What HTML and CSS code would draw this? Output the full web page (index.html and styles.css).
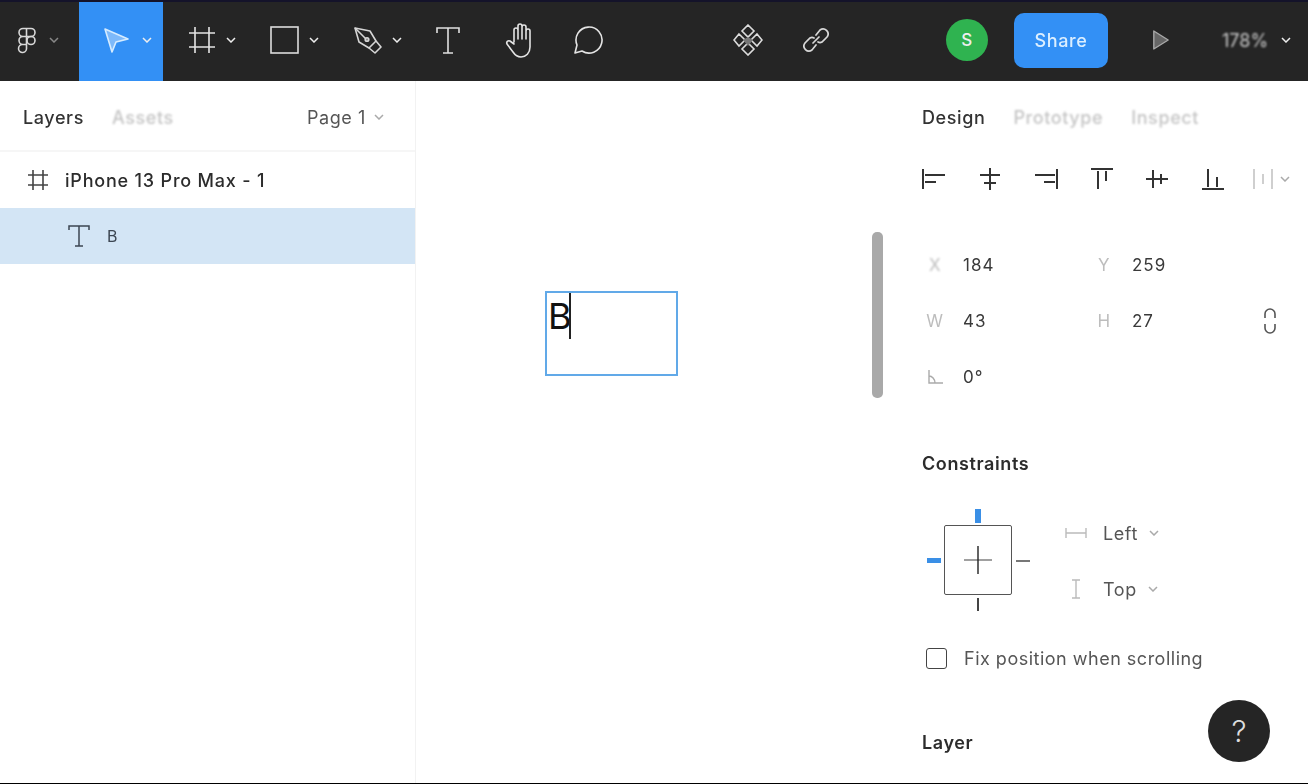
FILE: index.html
```html
<!doctype html>
<html lang="en-us">
  <head>
    <meta charset="utf-8">
    <title>Figma - iPhone 13 Pro Max</title>
    <link rel="stylesheet" href="styles.css">
  </head>
  <body>
    <svg class="defs" width="0" height="0">
      <symbol id="chev" viewBox="0 0 10 6"><path d="M1 1l4 4 4-4" fill="none" stroke="currentColor" stroke-width="1.5"/></symbol>
    </svg>

    <div class="app">
      <!-- top toolbar -->
      <header class="toolbar">
        <div class="menu">
          <svg class="ic-logo" width="20" height="27" viewBox="0 0 20 27" fill="none" stroke="#d8d8d8" stroke-width="1.6">
            <path d="M9.5 1.5H6a4 4 0 0 0 0 8h3.5zM9.5 1.5H14a4 4 0 0 1 0 8H9.5zM9.5 9.5H6a4 4 0 0 0 0 8h3.5zM9.5 17.5H6a4 4 0 1 0 3.5 4.5z"/>
            <circle cx="14" cy="13.5" r="4"/>
          </svg>
          <svg class="chev chev-dim"><use href="#chev"/></svg>
        </div>
        <div class="move">
          <svg width="27" height="27" viewBox="0 0 27 27">
            <path d="M2 2l7 23 4-10 12-3z" fill="#7db9fa" stroke="#d6ecff" stroke-width="1.6" stroke-linejoin="round"/>
          </svg>
          <svg class="chev"><use href="#chev"/></svg>
        </div>
        <div class="tool tool-frame">
          <svg width="28" height="28" viewBox="0 0 28 28" fill="none" stroke="#e4e4e4" stroke-width="1.6">
            <path d="M7 1v26M21 1v26M1 7h26M1 21h26"/>
          </svg>
          <svg class="chev"><use href="#chev"/></svg>
        </div>
        <div class="tool tool-rect">
          <svg width="29" height="28" viewBox="0 0 29 28" fill="none" stroke="#dcdcdc" stroke-width="1.6">
            <rect x="1" y="1" width="27" height="26"/>
          </svg>
          <svg class="chev"><use href="#chev"/></svg>
        </div>
        <div class="tool tool-pen">
          <svg width="28" height="28" viewBox="0 0 28 28" fill="none" stroke="#d6d6d6" stroke-width="1.6" stroke-linejoin="round">
            <path d="M1 2l15 3 6 10-7 7-10-6z"/>
            <path d="M1 2l11 11"/>
            <circle cx="13" cy="13.5" r="1.8" fill="#8a8a8a"/>
            <path d="M15 22l6 5 6-6-5-6"/>
          </svg>
          <svg class="chev"><use href="#chev"/></svg>
        </div>
        <svg class="tool-t" width="24" height="28" viewBox="0 0 24 28" fill="none" stroke="#e0e0e0" stroke-width="1.6">
          <path d="M1 7V2h22v5M12 2v25M7 27h10"/>
        </svg>
        <svg class="tool-hand" width="30" height="36" viewBox="0 0 30 36" fill="none" stroke="#e4e4e4" stroke-width="1.6" stroke-linejoin="round" stroke-linecap="round">
          <path d="M9 20V8a2 2 0 0 1 4 0v9M13 17V4a2 2 0 0 1 4 0v13M17 17V5a2 2 0 0 1 4 0v12M21 17V9a2 2 0 0 1 4 0v16c0 6-4 10-9 10-4 0-6-2-8-5l-6-8c-1-2 1-4 3-3l4 3"/>
        </svg>
        <svg class="tool-comment" width="32" height="28" viewBox="0 0 32 28" fill="none" stroke="#e4e4e4" stroke-width="1.6" stroke-linejoin="round">
          <path d="M2 27l2-8a13 13 0 1 1 5 6z"/>
        </svg>
        <svg class="tool-comp" width="30" height="32" viewBox="0 0 30 32" fill="none" stroke="#dcdcdc" stroke-width="1.6">
          <path d="M15 1l6 6-6 6-6-6zM15 19l6 6-6 6-6-6zM6 10l6 6-6 6-5-6zM24 10l5 6-5 6-6-6z"/>
          <path d="M15 13l5 3-5 6-5-6z" fill="#777" stroke="none"/>
        </svg>
        <svg class="tool-link" width="26" height="26" viewBox="0 0 26 26" fill="none" stroke="#d8d8d8" stroke-width="1.7" stroke-linecap="round">
          <path d="M13 8l4-5a5 5 0 0 1 7 7l-5 5a4 4 0 0 1-4 0M13 18l-4 5a5 5 0 0 1-7-7l5-5a4 4 0 0 1 4 0M10 16l6-6"/>
        </svg>
        <div class="top-right">
          <div class="avatar">S</div>
          <div class="share"><span>Share</span></div>
          <svg class="play" width="18" height="22" viewBox="0 0 20 24">
            <path d="M2 2l16 10L2 22z" fill="#666" stroke="#aaa" stroke-width="1.5" stroke-linejoin="round"/>
          </svg>
          <span class="zoom-val">178%</span>
          <svg class="chev"><use href="#chev"/></svg>
        </div>
      </header>

      <div class="workspace">
        <!-- layers panel -->
        <aside class="left">
          <div class="left-head">
            <span class="tab tab-on">Layers</span>
            <span class="tab tab-off">Assets</span>
            <span class="page">Page 1</span>
            <svg class="chev chev-soft"><use href="#chev"/></svg>
          </div>
          <div class="row">
            <svg width="22" height="22" viewBox="0 0 22 22" fill="none" stroke="#444" stroke-width="1.6">
              <path d="M6 1v20M16 1v20M1 6h20M1 16h20"/>
            </svg>
            <span class="row-name">iPhone 13 Pro Max - 1</span>
          </div>
          <div class="row row-sel">
            <svg width="22" height="22" viewBox="0 0 22 22" fill="none" stroke="#3c4652" stroke-width="1.5">
              <path d="M1 5V1h20v4M11 1v20M7 21h8"/>
            </svg>
            <span class="row-b">B</span>
          </div>
        </aside>

        <!-- canvas -->
        <main class="canvas">
          <div class="frame">
            <span class="frame-text">B</span><span class="caret"></span>
          </div>
          <div class="scroll"></div>
        </main>

        <!-- design panel -->
        <aside class="right">
          <div class="right-head">
            <span class="tab tab-on">Design</span>
            <span class="tab tab-off">Prototype</span>
            <span class="tab tab-off">Inspect</span>
          </div>
          <div class="aligns">
            <svg width="24" height="22" viewBox="0 0 24 22" stroke="#333" stroke-width="2"><path d="M1 1v20" /><path d="M3 7h20M3 14h11"/></svg>
            <svg width="24" height="22" viewBox="0 0 24 22" stroke="#333" stroke-width="2"><path d="M12 0v22M2 7h20M6 15h12"/></svg>
            <svg width="24" height="22" viewBox="0 0 24 22" stroke="#333" stroke-width="2"><path d="M23 1v20M1 7h20M10 14h11"/></svg>
            <svg width="22" height="22" viewBox="0 0 22 22" stroke="#333" stroke-width="2"><path d="M0 1h22M7 3v18M15 3v10"/></svg>
            <svg width="24" height="22" viewBox="0 0 24 22" stroke="#333" stroke-width="2"><path d="M1 11h22M8 2v18M16 6v10"/></svg>
            <svg width="24" height="22" viewBox="0 0 24 22" stroke="#333" stroke-width="2"><path d="M1 21h22M7 1v18M16 9v10"/></svg>
            <div class="dist">
              <svg width="22" height="22" viewBox="0 0 22 22" stroke="#c4c4c4" stroke-width="1.6"><path d="M2 1v20M20 1v20M11 6v10"/></svg>
              <svg class="chev chev-soft"><use href="#chev"/></svg>
            </div>
          </div>

          <div class="props">
            <div class="prop"><span class="prop-label label-soft">X</span><span class="prop-val">184</span></div>
            <div class="prop"><span class="prop-label">Y</span><span class="prop-val">259</span></div>
            <div class="prop"><span class="prop-label">W</span><span class="prop-val">43</span></div>
            <div class="prop"><span class="prop-label">H</span><span class="prop-val">27</span></div>
            <div class="prop">
              <span class="prop-label">
                <svg width="16" height="14" viewBox="0 0 16 14" fill="none" stroke="#aaa" stroke-width="1.4"><path d="M2 0v13h14M2 6c3 0 6 3 6 7"/></svg>
              </span>
              <span class="prop-val">0°</span>
            </div>
            <svg class="ratio" width="14" height="26" viewBox="0 0 14 26" fill="none" stroke="#555" stroke-width="1.6">
              <path d="M2 10V6a5 5 0 0 1 10 0v4M2 16v4a5 5 0 0 0 10 0v-4"/>
            </svg>
          </div>

          <h3 class="heading">Constraints</h3>
          <div class="constraints">
            <div class="widget">
              <span class="tick tick-top"></span>
              <span class="tick tick-left"></span>
              <span class="tick tick-right"></span>
              <span class="tick tick-bottom"></span>
              <div class="box">
                <svg width="28" height="28" viewBox="0 0 28 28" stroke-width="1.4">
                  <path d="M0 14h28" stroke="#777"/>
                  <path d="M14 0v28" stroke="#222"/>
                </svg>
              </div>
            </div>
            <div class="selects">
              <div class="select">
                <svg class="select-ic" width="22" height="12" viewBox="0 0 22 12" fill="none" stroke="#bbb" stroke-width="1.4"><path d="M1 1v10M21 1v10M1 6h20"/></svg>
                <span>Left</span>
                <svg class="chev chev-soft"><use href="#chev"/></svg>
              </div>
              <div class="select">
                <svg class="select-ic" width="22" height="20" viewBox="0 0 22 20" fill="none" stroke="#bbb" stroke-width="1.4"><path d="M7 1h8M7 19h8M11 1v18"/></svg>
                <span>Top</span>
                <svg class="chev chev-soft"><use href="#chev"/></svg>
              </div>
            </div>
          </div>

          <label class="fix">
            <span class="check"></span>
            <span>Fix position when scrolling</span>
          </label>

          <h3 class="heading heading-layer">Layer</h3>
        </aside>
      </div>
    </div>

    <div class="help">?</div>
  </body>
</html>
```

FILE: styles.css
```css
* {
  box-sizing: border-box;
}

body {
  margin: 0;
  height: 784px;
  overflow: hidden;
  font-family: Inter, "Liberation Sans", sans-serif;
  font-size: 18px;
  letter-spacing: 0.6px;
  color: #333;
  background-color: #fff;
}

.defs {
  position: absolute;
}

.app {
  display: flex;
  flex-direction: column;
  height: 784px;
  border-bottom: 1px solid #000;
}

svg {
  display: block;
  flex: none;
}

.chev {
  width: 10px;
  height: 6px;
  color: #eee;
}

.chev-dim {
  color: #888;
}

.chev-soft {
  color: #aaa;
}

/* toolbar */
.toolbar {
  display: flex;
  align-items: center;
  height: 81px;
  flex: none;
  padding-bottom: 3px;
  background-color: #252525;
  border-top: 2px solid #14132a;
  color: #eee;
}

.menu {
  display: flex;
  align-items: center;
  gap: 12px;
  width: 79px;
  padding-left: 17px;
}

.move {
  display: flex;
  align-items: center;
  align-self: stretch;
  gap: 12px;
  width: 84px;
  margin-bottom: -3px;
  padding: 0 0 3px 24px;
  background-color: #3390f5;
}

.tool {
  display: flex;
  align-items: center;
  gap: 10px;
}

.tool-frame {
  margin-left: 25px;
}

.tool-rect {
  margin-left: 34px;
}

.tool-pen {
  margin-left: 35px;
}

.tool-t {
  margin-left: 34px;
}

.tool-hand {
  margin-left: 45px;
}

.tool-comment {
  margin-left: 38px;
}

.tool-comp {
  margin-left: 128px;
}

.tool-link {
  margin-left: 40px;
}

.top-right {
  display: flex;
  align-items: center;
  margin-left: auto;
  padding-right: 17px;
}

.avatar {
  display: flex;
  align-items: center;
  justify-content: center;
  width: 42px;
  height: 42px;
  border-radius: 50%;
  background-color: #2fb350;
  font-size: 17px;
  font-weight: 500;
}

.share {
  display: flex;
  align-items: center;
  justify-content: center;
  width: 94px;
  height: 55px;
  margin-left: 26px;
  border-radius: 10px;
  background-color: #3390f5;
  color: #dcefff;
  font-weight: 500;
}

.share span {
  filter: blur(0.7px);
}

.play {
  margin-left: 44px;
  filter: blur(0.6px);
}

.zoom-val {
  margin-left: 52px;
  width: 46px;
  color: #ccc;
  letter-spacing: 0;
  filter: blur(0.8px);
}

.top-right .chev {
  margin-left: 13px;
}

/* shared tabs */
.tab {
  font-weight: 500;
}

.tab-on {
  color: #333;
}

.tab-off {
  color: #c4c4c4;
  filter: blur(1.3px);
}

.workspace {
  display: flex;
  flex: 1;
  min-height: 0;
}

/* layers */
.left {
  width: 416px;
  flex: none;
  border-right: 1px solid #f2f2f2;
  filter: blur(0.3px);
}

.left-head {
  display: flex;
  align-items: center;
  height: 71px;
  padding: 3px 31px 0 23px;
  border-bottom: 2px solid #f6f6f6;
}

.left-head .tab-off {
  margin-left: 28px;
}

.page {
  margin-left: auto;
  color: #555;
}

.left-head .chev {
  margin-left: 8px;
}

.row {
  display: flex;
  align-items: center;
  height: 56px;
  padding-left: 27px;
}

.row-name {
  margin-left: 16px;
  font-weight: 500;
  letter-spacing: 0.8px;
  color: #2c2c2c;
}

.row-sel {
  padding-left: 68px;
  background-color: #d3e5f5;
}

.row-b {
  margin-left: 17px;
  font-size: 16px;
  color: #3c4652;
}

/* canvas */
.canvas {
  position: relative;
  flex: 1;
}

.frame {
  position: absolute;
  left: 129px;
  top: 210px;
  display: flex;
  width: 133px;
  height: 85px;
  border: 2px solid #61a9e8;
  padding-left: 1px;
}

.frame-text {
  font-size: 36px;
  line-height: 46px;
  letter-spacing: 0;
  color: #111;
}

.caret {
  width: 2px;
  height: 46px;
  margin-left: -3px;
  background-color: #222;
}

.scroll {
  position: absolute;
  left: 456px;
  top: 151px;
  width: 11px;
  height: 166px;
  border-radius: 5px;
  background-color: #a9a9a9;
}

/* design panel */
.right {
  width: 418px;
  flex: none;
  padding-left: 32px;
  filter: blur(0.3px);
}

.right-head {
  display: flex;
  align-items: center;
  gap: 28px;
  height: 70px;
  padding-top: 2px;
}

.aligns {
  display: flex;
  align-items: center;
  gap: 32px;
  height: 56px;
}

.aligns svg:nth-child(4) {
  margin-left: 1px;
}

.dist {
  display: flex;
  align-items: center;
  gap: 6px;
  margin-left: -5px;
}

.props {
  position: relative;
  display: grid;
  grid-template-columns: 169px 169px;
  grid-auto-rows: 56px;
  margin-top: 30px;
  font-size: 17px;
}

.prop {
  display: flex;
  align-items: center;
}

.prop-label {
  display: flex;
  justify-content: center;
  width: 26px;
  margin-right: 15px;
  color: #bdbdbd;
  font-size: 17px;
}

.label-soft {
  filter: blur(1.2px);
}

.prop-val {
  letter-spacing: 1px;
  color: #3a3a3a;
}

.ratio {
  position: absolute;
  left: 341px;
  top: 71px;
}

.heading {
  margin: 0;
  font-size: 18px;
  font-weight: 600;
  color: #2c2c2c;
}

.props + .heading {
  margin-top: 48px;
  line-height: 22px;
}

.constraints {
  display: flex;
  align-items: flex-start;
  margin-top: 33px;
}

.widget {
  position: relative;
  width: 108px;
  height: 104px;
  padding: 17px 0 0 22px;
}

.box {
  display: flex;
  align-items: center;
  justify-content: center;
  width: 68px;
  height: 70px;
  border: 1.5px solid #555;
  border-radius: 2px;
}

.tick {
  position: absolute;
  background-color: #444;
}

.tick-top {
  left: 53px;
  top: 1px;
  width: 6px;
  height: 14px;
  background-color: #3a8fe6;
}

.tick-left {
  left: 5px;
  top: 50px;
  width: 14px;
  height: 5px;
  background-color: #3a8fe6;
}

.tick-right {
  left: 94px;
  top: 52px;
  width: 14px;
  height: 1.5px;
  background-color: #777;
}

.tick-bottom {
  left: 55px;
  top: 90px;
  width: 2px;
  height: 13px;
}

.selects {
  display: flex;
  flex-direction: column;
  margin-left: 35px;
  margin-top: -3px;
}

.select {
  display: flex;
  align-items: center;
  height: 56px;
  color: #555;
  font-size: 18px;
}

.select-ic {
  margin-right: 16px;
}

.select .chev {
  margin-left: 11px;
}

.fix {
  display: flex;
  align-items: center;
  gap: 17px;
  margin-top: 31px;
  padding-left: 4px;
  letter-spacing: 0.5px;
  color: #555;
}

.check {
  width: 21px;
  height: 21px;
  border: 1.5px solid #444;
  border-radius: 3px;
}

.heading-layer {
  margin-top: 63px;
}

/* floats over the panel */
.help {
  position: absolute;
  left: 1208px;
  top: 700px;
  display: flex;
  align-items: center;
  justify-content: center;
  width: 62px;
  height: 62px;
  border-radius: 50%;
  background-color: #252525;
  color: #ddd;
  font-size: 30px;
  font-weight: 300;
  letter-spacing: 0;
}
```
